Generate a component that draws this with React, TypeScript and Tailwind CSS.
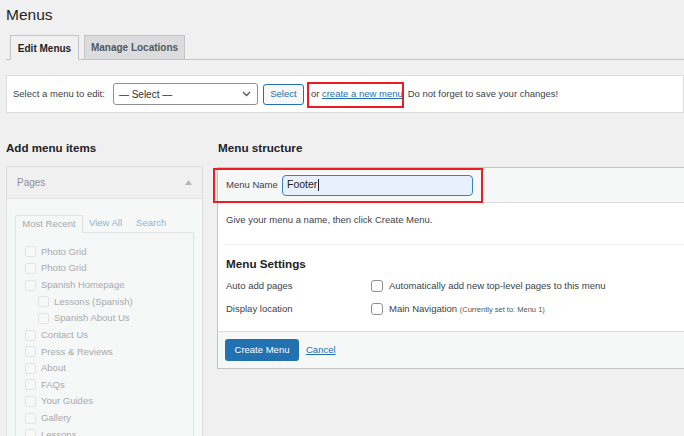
import type { ReactNode } from "react";

type PageItem = { label: string; child?: boolean };

const pages: PageItem[] = [
  { label: "Photo Grid" },
  { label: "Photo Grid" },
  { label: "Spanish Homepage" },
  { label: "Lessons (Spanish)", child: true },
  { label: "Spanish About Us", child: true },
  { label: "Contact Us" },
  { label: "Press & Reviews" },
  { label: "About" },
  { label: "FAQs" },
  { label: "Your Guides" },
  { label: "Gallery" },
  { label: "Lessons" },
];

function FadedCheckbox() {
  return <span className="h-[11px] w-[11px] shrink-0 rounded-[2px] border border-[#e2e3e4] bg-[#f8f8f8]" />;
}

function Checkbox() {
  return <span className="h-[12px] w-[12px] shrink-0 rounded-[3px] border border-[#8c8f94] bg-white" />;
}

function SettingRow({ label, children }: { label: string; children: ReactNode }) {
  return (
    <div className="flex h-[14px] items-center">
      <span className="w-[145px] shrink-0 text-[#3c434a]">{label}</span>
      <div className="flex items-center gap-[6px]">
        <Checkbox />
        {children}
      </div>
    </div>
  );
}

function PagesPanel() {
  return (
    <div className="mt-[10px] h-[300px] border border-[#dcdcde] bg-[#f6f7f7]">
      <div className="flex h-[32px] items-center justify-between border-b border-[#e4e4e5] bg-[#f0f0f1] pl-[10px] pr-[10px]">
        <span className="text-[10px] text-[#8c8f94]">Pages</span>
        <svg width="7" height="5" viewBox="0 0 7 5">
          <path d="M0 5 L3.5 0 L7 5 Z" fill="#b4b6b9" />
        </svg>
      </div>
      <div className="pl-[8px] pr-[8px] pt-[16px]">
        <div className="flex h-[17px] items-end text-[9.5px]">
          <span className="relative z-10 -mb-px flex h-[18px] w-[68px] items-center justify-center border border-b-0 border-[#e2e3e4] bg-[#f6f7f7] text-[#a7aaad]">
            Most Recent
          </span>
          <span className="ml-[6px] flex h-[17px] items-center text-[#8fb5d6]">View All</span>
          <span className="ml-[14px] flex h-[17px] items-center text-[#8fb5d6]">Search</span>
        </div>
        <div className="h-[240px] border border-[#e2e3e4] bg-[#f6f7f7] pl-[9px] pt-[10.5px]">
          {pages.map((page, index) => (
            <div
              key={`${page.label}-${index}`}
              className={`flex h-[16.65px] items-center gap-[5px] text-[9.5px] text-[#a7aaad] ${page.child ? "pl-[13px]" : ""}`}
            >
              <FadedCheckbox />
              <span>{page.label}</span>
            </div>
          ))}
        </div>
      </div>
    </div>
  );
}

function MenuStructure() {
  return (
    <div className="relative mt-[11px] w-[480px] border border-[#c3c4c7] bg-white">
      <div className="flex h-[35px] items-center border-b border-[#dcdcde] bg-[#f6f7f7] pl-[8px]">
        <span className="w-[56px] text-[9.5px] text-[#3c434a]">Menu Name</span>
        <div className="flex h-[21px] w-[191px] items-center rounded-[4px] border-[1.5px] border-[#3582c4] bg-[#e8f0fe] pl-[4px] text-[10.5px] text-[#1d2327]">
          Footer
          <span className="ml-px h-[12px] w-px bg-[#1d2327]" />
        </div>
      </div>
      <div className="pointer-events-none absolute left-[-5px] top-[0px] h-[35px] w-[270px] border-2 border-[#ec1c24]" />
      <div className="pl-[8px] pr-[8px] pt-[10px] text-[9.5px]">
        <p className="leading-[13px] text-[#3c434a]">Give your menu a name, then click Create Menu.</p>
        <div className="mt-[18px] h-px bg-[#f0f0f1]" />
        <h3 className="mt-[11px] text-[11.7px] font-bold leading-[15px] text-[#1d2327]">Menu Settings</h3>
        <div className="mt-[8px] flex flex-col gap-[9px] pb-[15px]">
          <SettingRow label="Auto add pages">
            <span className="text-[#3c434a]">Automatically add new top-level pages to this menu</span>
          </SettingRow>
          <SettingRow label="Display location">
            <span className="text-[#3c434a]">
              Main Navigation <span className="text-[7.5px] text-[#50575e]">(Currently set to: Menu 1)</span>
            </span>
          </SettingRow>
        </div>
      </div>
      <div className="flex h-[37px] items-center border-t border-[#dcdcde] bg-[#f6f7f7] pl-[7px]">
        <button className="h-[22px] w-[74px] rounded-[3px] bg-[#2271b1] text-[9.5px] text-white">Create Menu</button>
        <span className="ml-[7px] text-[9.5px] text-[#2271b1] underline">Cancel</span>
      </div>
    </div>
  );
}

export default function App() {
  return (
    <div className="h-[436px] w-[684px] overflow-hidden bg-[#f0f0f1] font-['Liberation_Sans',Arial,sans-serif]">
      <h1 className="pl-[6px] pt-[5px] text-[15.5px] leading-[20px] text-[#1d2327]">Menus</h1>

      <div className="ml-[6px] mt-[10px] flex h-[25px] items-end gap-[5px] border-b border-[#c3c4c7] pl-[4px]">
        <span className="-mb-px flex h-[25px] w-[69px] items-center justify-center border border-b-0 border-[#c3c4c7] bg-[#f0f0f1] text-[10px] font-bold text-[#1d2327]">
          Edit Menus
        </span>
        <span className="flex h-[24px] w-[101px] items-center justify-center border border-b-0 border-[#c3c4c7] bg-[#dcdcde] text-[10px] font-bold text-[#50575e]">
          Manage Locations
        </span>
      </div>

      <div className="relative ml-[6px] mt-[15px] flex h-[38px] items-center border border-[#dcdcde] bg-white pl-[6px] text-[9.5px] text-[#3c434a]">
        <span>Select a menu to edit:</span>
        <div className="ml-[8px] flex h-[22px] w-[145px] items-center justify-between rounded-[3px] border border-[#8c8f94] pl-[5px] pr-[6px] text-[10px] text-[#2c3338]">
          <span>— Select —</span>
          <svg width="9" height="6" viewBox="0 0 9 6" fill="none">
            <path d="M1 1 L4.5 4.5 L8 1" stroke="#50575e" strokeWidth="1.3" />
          </svg>
        </div>
        <button className="ml-[5px] h-[21px] w-[41px] rounded-[3px] border border-[#2271b1] bg-[#f6f7f7] text-[9.5px] text-[#2271b1]">
          Select
        </button>
        <span className="ml-[7px]">or</span>
        <span className="ml-[2.6px] text-[#2271b1] underline">create a new menu</span>
        <span className="ml-[5px]">Do not forget to save your changes!</span>
        <div className="pointer-events-none absolute left-[300px] top-[6px] h-[26px] w-[97px] border-2 border-[#ec1c24]" />
      </div>

      <div className="flex">
        <div className="ml-[6px] w-[197px] shrink-0">
          <h2 className="mt-[27px] text-[11.6px] font-bold leading-[16px] text-[#1d2327]">Add menu items</h2>
          <PagesPanel />
        </div>
        <div className="ml-[14px]">
          <h2 className="ml-px mt-[27px] text-[11.7px] font-bold leading-[16px] text-[#1d2327]">Menu structure</h2>
          <MenuStructure />
        </div>
      </div>
    </div>
  );
}
